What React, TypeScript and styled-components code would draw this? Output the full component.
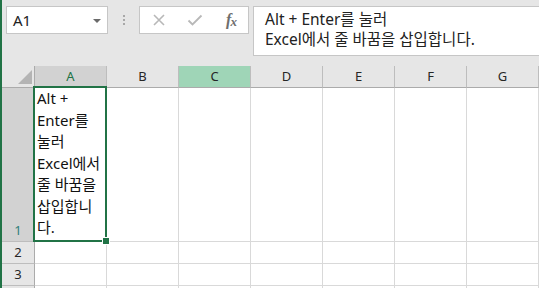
import React from 'react'
import styled, { createGlobalStyle } from 'styled-components'

const GlobalStyle = createGlobalStyle`
    html, body {
        margin: 0;
        padding: 0;
        background: #ffffff;
        overflow: hidden;
    }
    body {
        font-family: "Noto Sans", "Noto Sans CJK KR", sans-serif;
    }
`

const GREEN = '#217346'
const GRID = '#d9d9d9'

const Window = styled.div`
    width: 539px;
    height: 288px;
    box-sizing: border-box;
    border-left: 2px solid ${GREEN};
    display: flex;
    flex-direction: column;
    background: #ffffff;
    overflow: hidden;
`

const Toolbar = styled.div`
    height: 66px;
    flex: none;
    box-sizing: border-box;
    background: #e6e6e6;
    display: flex;
    align-items: flex-start;
    padding: 6px 0 0 4px;
`

const NameBox = styled.div`
    width: 102px;
    height: 28px;
    box-sizing: border-box;
    background: #ffffff;
    border: 1px solid #c6c6c6;
    display: flex;
    align-items: center;
    justify-content: space-between;
    padding: 0 6px 0 6px;
    font-size: 15px;
    color: #222222;
`

const DropArrow = styled.span`
    width: 0;
    height: 0;
    border-left: 4px solid transparent;
    border-right: 4px solid transparent;
    border-top: 4px solid #6a6a6a;
    margin-top: 1px;
`

const Grip = styled.div`
    width: 31px;
    height: 28px;
    display: flex;
    flex-direction: column;
    align-items: center;
    justify-content: center;
    gap: 2px;
    span {
        width: 2px;
        height: 2px;
        background: #a8a8a8;
    }
`

const ButtonBox = styled.div`
    width: 110px;
    height: 28px;
    box-sizing: border-box;
    background: #ffffff;
    border: 1px solid #c6c6c6;
    display: grid;
    grid-template-columns: 36px 36px 36px;
    align-items: center;
    justify-items: center;
    padding-left: 1px;
`

const FxLabel = styled.span`
    font-family: "Liberation Serif", serif;
    font-style: italic;
    font-weight: bold;
    font-size: 16px;
    color: #6e6e6e;
    letter-spacing: -1px;
    sub {
        font-size: 13px;
        vertical-align: -1px;
    }
`

const FormulaBar = styled.div`
    margin-left: 4px;
    flex: 1;
    height: 50px;
    box-sizing: border-box;
    background: #ffffff;
    border: 1px solid #c6c6c6;
    border-right: none;
    padding: 2px 0 0 11px;
    font-size: 15.5px;
    line-height: 20px;
    color: #222222;
    white-space: nowrap;
`

const Sheet = styled.div`
    flex: 1;
    display: grid;
    grid-template-columns: 33px repeat(7, 72px) 1fr;
    grid-template-rows: 22px 154px 22px 22px 1fr;
`

const Corner = styled.div`
    background: #e6e6e6;
    border-right: 1px solid #ababab;
    border-bottom: 1px solid #ababab;
    box-sizing: border-box;
    display: flex;
    align-items: flex-end;
    justify-content: flex-end;
    padding: 0 2px 3px 0;
`

const Triangle = styled.span`
    width: 0;
    height: 0;
    border-left: 14px solid transparent;
    border-bottom: 14px solid #b4b4b4;
`

const ColHeader = styled.div<{ state?: 'active' | 'mark' }>`
    box-sizing: border-box;
    background: ${p => p.state === 'active' ? '#d2d2d2' : p.state === 'mark' ? '#9fd5b7' : '#e6e6e6'};
    color: ${p => p.state === 'active' ? GREEN : '#262626'};
    border-right: 1px solid #bdbdbd;
    border-bottom: 1px solid #ababab;
    display: flex;
    align-items: center;
    justify-content: center;
    font-size: 13px;
    padding-bottom: 1px;
`

const RowHeader = styled.div<{ active?: boolean }>`
    box-sizing: border-box;
    background: ${p => p.active ? '#d2d2d2' : '#e6e6e6'};
    color: ${p => p.active ? '#2f7f7a' : '#262626'};
    border-right: 1px solid #ababab;
    border-bottom: 1px solid #bdbdbd;
    display: flex;
    align-items: flex-end;
    justify-content: center;
    font-size: 13px;
    padding-bottom: 2px;
`

const Cell = styled.div`
    box-sizing: border-box;
    border-right: 1px solid ${GRID};
    border-bottom: 1px solid ${GRID};
`

const ActiveCell = styled(Cell)`
    position: relative;
    padding: 0 0 0 2px;
    font-size: 15px;
    line-height: 21.5px;
    color: #111111;
    white-space: nowrap;
`

const SelectionFrame = styled.div`
    position: absolute;
    top: -2px;
    left: -2px;
    right: -1px;
    bottom: -1px;
    border: 2px solid ${GREEN};
    pointer-events: none;
`

const FillHandle = styled.div`
    position: absolute;
    right: -3px;
    bottom: -3px;
    width: 6px;
    height: 6px;
    background: ${GREEN};
    box-shadow: 0 0 0 1px #ffffff;
`

const CellLine = styled.div`
    display: block;
`

const columns = ['A', 'B', 'C', 'D', 'E', 'F', 'G']
const cellLines = ['Alt +', 'Enter를', '눌러', 'Excel에서', '줄 바꿈을', '삽입합니', '다.']

const CancelIcon = () => (
    <svg width="14" height="14" viewBox="0 0 14 14">
        <path d="M2 2 L12 12 M12 2 L2 12" stroke="#b8b8b8" strokeWidth="1.6" fill="none" />
    </svg>
)

const CheckIcon = () => (
    <svg width="16" height="14" viewBox="0 0 16 14">
        <path d="M1.5 7.5 L5.5 11.5 L14.5 2.5" stroke="#b8b8b8" strokeWidth="1.8" fill="none" />
    </svg>
)

const App: React.FC = () => (
    <>
        <GlobalStyle />
        <Window>
            <Toolbar>
                <NameBox>
                    <span>A1</span>
                    <DropArrow />
                </NameBox>
                <Grip>
                    <span /><span /><span />
                </Grip>
                <ButtonBox>
                    <CancelIcon />
                    <CheckIcon />
                    <FxLabel>f<sub>x</sub></FxLabel>
                </ButtonBox>
                <FormulaBar>
                    <div>Alt + Enter를 눌러</div>
                    <div>Excel에서 줄 바꿈을 삽입합니다.</div>
                </FormulaBar>
            </Toolbar>
            <Sheet>
                <Corner><Triangle /></Corner>
                {columns.map(c => (
                    <ColHeader key={c} state={c === 'A' ? 'active' : c === 'C' ? 'mark' : undefined}>{c}</ColHeader>
                ))}
                <ColHeader />

                <RowHeader active>1</RowHeader>
                <ActiveCell>
                    {cellLines.map((t, i) => <CellLine key={i}>{t}</CellLine>)}
                    <SelectionFrame />
                    <FillHandle />
                </ActiveCell>
                {columns.slice(1).map(c => <Cell key={c} />)}
                <Cell />

                {[2, 3].map(r => (
                    <React.Fragment key={r}>
                        <RowHeader>{r}</RowHeader>
                        {columns.map(c => <Cell key={c} />)}
                        <Cell />
                    </React.Fragment>
                ))}
                <RowHeader />
                {columns.map(c => <Cell key={c} />)}
                <Cell />
            </Sheet>
        </Window>
    </>
)

export default App
